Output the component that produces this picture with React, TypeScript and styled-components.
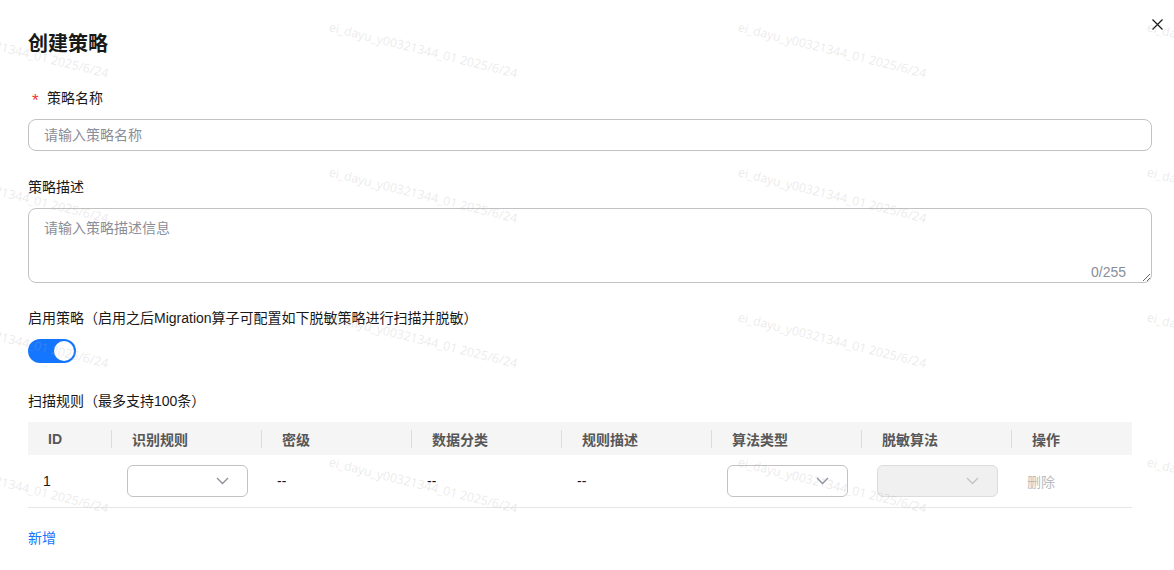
import React from "react";
import styled, { createGlobalStyle } from "styled-components";

const GlobalStyle = createGlobalStyle`
  html, body { margin: 0; padding: 0; background: #ffffff; }
  body {
    font-family: "Liberation Sans", "Noto Sans CJK SC", sans-serif;
    color: #191919;
    font-size: 14px;
  }
  * { box-sizing: border-box; }
`;

const Dialog = styled.div`
  position: relative;
  width: 1174px;
  height: 570px;
  overflow: hidden;
  padding: 29px 22px 0 28px;
  display: flex;
  flex-direction: column;
`;

const Title = styled.h2`
  margin: 0;
  font-size: 20px;
  line-height: 28px;
  font-weight: 700;
  color: #191919;
  font-family: "Noto Sans CJK SC", sans-serif;
`;

const CloseButton = styled.button`
  position: absolute;
  top: 17px;
  right: 9px;
  width: 15px;
  height: 15px;
  padding: 0;
  border: none;
  background: transparent;
  display: flex;
  align-items: center;
  justify-content: center;
  cursor: pointer;
`;

const FormItem = styled.div<{ $mt: number }>`
  display: flex;
  flex-direction: column;
  margin-top: ${(p) => p.$mt}px;
`;

const Label = styled.label`
  display: flex;
  align-items: center;
  height: 22px;
  font-size: 14px;
  line-height: 22px;
  margin-bottom: 10px;
  color: #191919;
  font-family: "Liberation Sans", "Noto Sans CJK SC", sans-serif;
`;

const Required = styled.span`
  color: #f23535;
  width: 19px;
  padding-left: 4px;
  font-size: 17px;
  line-height: 14px;
  height: 14px;
  margin-top: 6px;
`;

const TextInput = styled.input`
  width: 1124px;
  height: 32px;
  border: 1px solid #c2c2c2;
  border-radius: 8px;
  padding: 0 15px;
  font-size: 14px;
  font-family: "Liberation Sans", "Noto Sans CJK SC", sans-serif;
  color: #191919;
  outline: none;
  &::placeholder { color: #8a8e99; }
`;

const TextAreaWrap = styled.div`
  position: relative;
  width: 1124px;
  height: 75px;
`;

const TextArea = styled.textarea`
  width: 100%;
  height: 100%;
  border: 1px solid #c2c2c2;
  border-radius: 8px;
  padding: 8px 15px;
  font-size: 14px;
  line-height: 22px;
  font-family: "Liberation Sans", "Noto Sans CJK SC", sans-serif;
  color: #191919;
  outline: none;
  resize: vertical;
  display: block;
  &::placeholder { color: #8a8e99; }
`;

const Counter = styled.span`
  position: absolute;
  right: 26px;
  bottom: 1px;
  font-size: 14px;
  line-height: 20px;
  color: #8a8e99;
  pointer-events: none;
`;

const Toggle = styled.button<{ $on: boolean }>`
  width: 48px;
  height: 24px;
  border-radius: 12px;
  border: none;
  padding: 2px;
  background: ${(p) => (p.$on ? "#1476ff" : "#c2c2c2")};
  display: flex;
  justify-content: ${(p) => (p.$on ? "flex-end" : "flex-start")};
  align-items: center;
  cursor: pointer;
  &::after {
    content: "";
    width: 20px;
    height: 20px;
    border-radius: 50%;
    background: #ffffff;
  }
`;

const Table = styled.div`
  width: 1104px;
  display: grid;
  grid-template-columns: 84px repeat(6, 150px) 120px;
`;

const HeadCell = styled.div<{ $last?: boolean }>`
  position: relative;
  height: 33px;
  background: #f5f5f5;
  display: flex;
  align-items: center;
  padding-left: 20px;
  font-size: 14px;
  font-weight: 700;
  color: #575757;
  font-family: "Liberation Sans", "Noto Sans CJK SC", sans-serif;
  &::after {
    content: "";
    display: ${(p) => (p.$last ? "none" : "block")};
    position: absolute;
    right: 0;
    top: 8px;
    width: 1px;
    height: 18px;
    background: #dcdcdc;
  }
`;

const BodyCell = styled.div<{ $muted?: boolean }>`
  height: 53px;
  border-bottom: 1px solid #e6e6e6;
  display: flex;
  align-items: center;
  padding-left: 15px;
  font-size: 14px;
  color: ${(p) => (p.$muted ? "#bbbbbb" : "#191919")};
`;

const SelectBox = styled.div<{ $disabled?: boolean }>`
  width: 121px;
  height: 32px;
  border: 1px solid ${(p) => (p.$disabled ? "#dcdcdc" : "#c2c2c2")};
  background: ${(p) => (p.$disabled ? "#f0f0f0" : "#ffffff")};
  border-radius: 6px;
  display: flex;
  align-items: center;
  justify-content: flex-end;
  padding-right: 18px;
`;

const AddLink = styled.a`
  margin-top: 19px;
  font-size: 14px;
  line-height: 22px;
  color: #1476ff;
  text-decoration: none;
  cursor: pointer;
  width: fit-content;
`;

const WatermarkLayer = styled.div`
  position: absolute;
  inset: 0;
  pointer-events: none;
  z-index: 10;
  overflow: hidden;
`;

const Mark = styled.span<{ $x: number; $y: number }>`
  position: absolute;
  left: ${(p) => p.$x}px;
  top: ${(p) => p.$y - 11}px;
  font-family: "Open Sans", sans-serif;
  font-size: 12.4px;
  line-height: 12px;
  white-space: nowrap;
  color: rgba(170, 170, 170, 0.25);
  transform-origin: 0 11px;
  transform: rotate(14deg);
`;

const Chevron = ({ color }: { color: string }) => (
  <svg width="13" height="8" viewBox="0 0 13 8" fill="none">
    <path d="M1 1l5.5 5.5L12 1" stroke={color} strokeWidth="1.3" />
  </svg>
);

const CloseIcon = () => (
  <svg width="11" height="11" viewBox="0 0 11 11" fill="none">
    <path d="M0.5 0.5l10 10M10.5 0.5l-10 10" stroke="#191919" strokeWidth="1.2" />
  </svg>
);

const columns = ["ID", "识别规则", "密级", "数据分类", "规则描述", "算法类型", "脱敏算法", "操作"];

const marks: { x: number; y: number }[] = [];
for (let i = 0; i < 4; i++) {
  for (let j = 0; j < 4; j++) {
    marks.push({ x: -81 + 409 * i, y: 32 + 145 * j });
  }
}

export default function App() {
  return (
    <>
      <GlobalStyle />
      <Dialog>
        <Title>创建策略</Title>
        <CloseButton aria-label="close">
          <CloseIcon />
        </CloseButton>

        <FormItem $mt={30}>
          <Label>
            <Required>*</Required>策略名称
          </Label>
          <TextInput placeholder="请输入策略名称" />
        </FormItem>

        <FormItem $mt={25}>
          <Label>策略描述</Label>
          <TextAreaWrap>
            <TextArea placeholder="请输入策略描述信息" />
            <Counter>0/255</Counter>
          </TextAreaWrap>
        </FormItem>

        <FormItem $mt={24}>
          <Label>启用策略（启用之后Migration算子可配置如下脱敏策略进行扫描并脱敏）</Label>
          <Toggle $on aria-label="toggle" />
        </FormItem>

        <FormItem $mt={27}>
          <Label>扫描规则（最多支持100条）</Label>
          <Table>
            {columns.map((c, i) => (
              <HeadCell key={c} $last={i === columns.length - 1}>
                {c}
              </HeadCell>
            ))}
            <BodyCell>1</BodyCell>
            <BodyCell>
              <SelectBox>
                <Chevron color="#8a8e99" />
              </SelectBox>
            </BodyCell>
            <BodyCell>--</BodyCell>
            <BodyCell>--</BodyCell>
            <BodyCell>--</BodyCell>
            <BodyCell>
              <SelectBox>
                <Chevron color="#8a8e99" />
              </SelectBox>
            </BodyCell>
            <BodyCell>
              <SelectBox $disabled>
                <Chevron color="#c2c2c2" />
              </SelectBox>
            </BodyCell>
            <BodyCell $muted>删除</BodyCell>
          </Table>
        </FormItem>

        <AddLink>新增</AddLink>

        <WatermarkLayer>
          {marks.map((m, k) => (
            <Mark key={k} $x={m.x} $y={m.y}>
              ei_dayu_y00321344_01 2025/6/24
            </Mark>
          ))}
        </WatermarkLayer>
      </Dialog>
    </>
  );
}
